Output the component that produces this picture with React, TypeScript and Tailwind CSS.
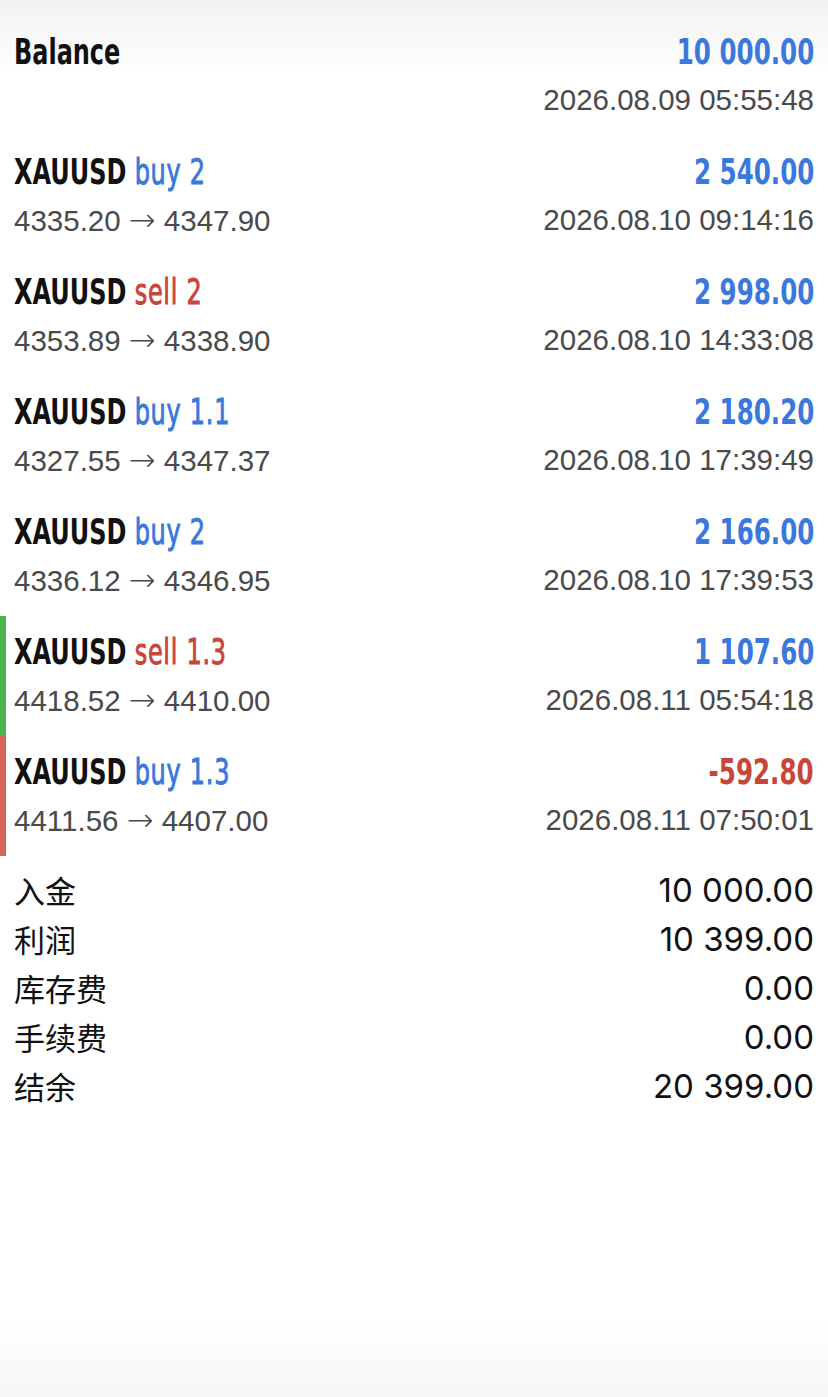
import React from "react";

type Deal = {
  side: "buy" | "sell";
  lots: string;
  from: string;
  to: string;
  profit: string;
  time: string;
  bar?: "green" | "red";
};

const deals: Deal[] = [
  { side: "buy", lots: "2", from: "4335.20", to: "4347.90", profit: "2 540.00", time: "2026.08.10 09:14:16" },
  { side: "sell", lots: "2", from: "4353.89", to: "4338.90", profit: "2 998.00", time: "2026.08.10 14:33:08" },
  { side: "buy", lots: "1.1", from: "4327.55", to: "4347.37", profit: "2 180.20", time: "2026.08.10 17:39:49" },
  { side: "buy", lots: "2", from: "4336.12", to: "4346.95", profit: "2 166.00", time: "2026.08.10 17:39:53" },
  { side: "sell", lots: "1.3", from: "4418.52", to: "4410.00", profit: "1 107.60", time: "2026.08.11 05:54:18", bar: "green" },
  { side: "buy", lots: "1.3", from: "4411.56", to: "4407.00", profit: "-592.80", time: "2026.08.11 07:50:01", bar: "red" },
];

const summary = [
  ["入金", "10 000.00"],
  ["利润", "10 399.00"],
  ["库存费", "0.00"],
  ["手续费", "0.00"],
  ["结余", "20 399.00"],
];

function Block({
  left,
  right,
  subLeft,
  subRight,
  bar,
}: {
  left: React.ReactNode;
  right: React.ReactNode;
  subLeft?: React.ReactNode;
  subRight: React.ReactNode;
  bar?: "green" | "red";
}) {
  const barCls =
    bar === "green"
      ? "border-l-[6px] border-[#4cb44c] pl-[8px]"
      : bar === "red"
      ? "border-l-[6px] border-[#d6665b] pl-[8px]"
      : "pl-[14px]";
  return (
    <div className={`flex flex-col py-[12px] pr-[14px] ${barCls}`}>
      <div className="flex h-[48px] items-center justify-between whitespace-nowrap">
        <span className="inline-block origin-left scale-x-[0.74] font-['DejaVu_Sans_Condensed','DejaVu_Sans',sans-serif] text-[36px] font-bold text-[#111]">
          {left}
        </span>
        <span className="inline-block origin-right scale-x-[0.78] font-['DejaVu_Sans_Condensed','DejaVu_Sans',sans-serif] text-[35px] font-bold">
          {right}
        </span>
      </div>
      <div className="flex h-[48px] items-center justify-between whitespace-nowrap font-['Liberation_Sans','Arial',sans-serif] text-[29.5px] text-[#4a4a4a]">
        <span>{subLeft}</span>
        <span>{subRight}</span>
      </div>
    </div>
  );
}

export default function App() {
  return (
    <div className="min-h-[1397px] w-full bg-[linear-gradient(to_bottom,#f2f2f2_0px,#ffffff_75px,#ffffff_1320px,#f6f6f6_1397px)]">
      <div className="flex flex-col pt-[16px]">
        <Block
          left="Balance"
          right={<span className="text-[#3a78dc]">10 000.00</span>}
          subRight="2026.08.09 05:55:48"
        />
        {deals.map((d, i) => (
          <Block
            key={i}
            bar={d.bar}
            left={
              <>
                XAUUSD{" "}
                <span
                  className={
                    d.side === "buy"
                      ? "font-normal tracking-[1px] text-[#3a78dc] [-webkit-text-stroke:0.9px_#3a78dc]"
                      : "font-normal tracking-[1px] text-[#c8453a] [-webkit-text-stroke:0.9px_#c8453a]"
                  }
                >
                  {d.side} {d.lots}
                </span>
              </>
            }
            right={
              <span className={d.profit.startsWith("-") ? "text-[#c8453a]" : "text-[#3a78dc]"}>{d.profit}</span>
            }
            subLeft={
              <>
                {d.from} <span className="font-['DejaVu_Sans',sans-serif] text-[32px] font-extralight">→</span> {d.to}
              </>
            }
            subRight={d.time}
          />
        ))}
        <div className="mt-[10px] flex flex-col px-[14px]">
          {summary.map(([k, v]) => (
            <div key={k} className="flex h-[49px] items-center justify-between text-[31px] text-[#111]">
              <span className="font-['Noto_Sans_CJK_SC',sans-serif]">{k}</span>
              <span className="font-['Inter','Roboto',sans-serif] text-[33px]">{v}</span>
            </div>
          ))}
        </div>
      </div>
    </div>
  );
}
